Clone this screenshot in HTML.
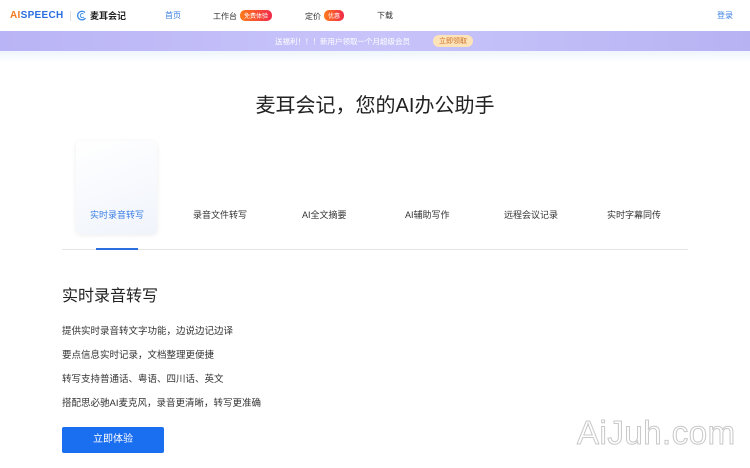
<!DOCTYPE html>
<html><head><meta charset="utf-8"><style>
*{margin:0;padding:0;box-sizing:border-box}
body{width:750px;height:468px;overflow:hidden;background:#fff;font-family:"Liberation Sans","Noto Sans CJK SC",sans-serif;position:relative;color:#333}
.a{position:absolute;white-space:nowrap}
.nav{font-size:8px;color:#333}
.badge{display:inline-block;color:#fff;font-size:6px;border-radius:5px;padding:1px 4px;background:linear-gradient(90deg,#ff7a1a,#f02a4a);vertical-align:1px;margin-left:3px}
.tab{font-size:9px;color:#333;top:208px}
.p{font-size:9.5px;color:#333;left:62px}
</style></head><body>
<div class="a" style="left:10px;top:10px;font-size:10px;font-weight:bold;color:#2a6ee0;letter-spacing:0.3px"><span style="color:#f07a20">AI</span>SPEECH</div>
<div class="a" style="left:70px;top:11px;width:1px;height:10px;background:#ddd"></div>
<svg class="a" style="left:76px;top:10px" width="11" height="11" viewBox="0 0 11 11"><path d="M9 2.5A4.3 4.3 0 1 0 9.5 8" fill="none" stroke="#3b8be8" stroke-width="1.3"/><path d="M7.5 4A2 2 0 1 0 7.8 7" fill="none" stroke="#3b8be8" stroke-width="1"/></svg>
<div class="a" style="left:90px;top:9px;font-size:9px;font-weight:bold;color:#222">麦耳会记</div>
<div class="a nav" style="left:165px;top:10px;color:#3b7fe6">首页</div>
<div class="a nav" style="left:213px;top:10px">工作台<span class="badge">免费体验</span></div>
<div class="a nav" style="left:305px;top:10px">定价<span class="badge">优惠</span></div>
<div class="a nav" style="left:377px;top:10px">下载</div>
<div class="a nav" style="left:717px;top:10px;color:#3b7fe6">登录</div>
<div class="a" style="left:0;top:31px;width:750px;height:20px;background:linear-gradient(90deg,#b9b4f5,#c8c4fa 50%,#b7b3f3)"></div>
<div class="a" style="left:275px;top:36px;font-size:7.5px;color:#fff">送福利！！！新用户领取一个月超级会员</div>
<div class="a" style="left:433px;top:35px;font-size:7px;color:#d0702a;background:#fde3b8;border-radius:6px;padding:1px 6px">立即领取</div>
<div class="a" style="left:0;top:51px;width:750px;height:12px;background:linear-gradient(#eef5fd,#fff)"></div>
<div class="a" style="left:0;top:89px;width:750px;text-align:center;font-size:20px;color:#222">麦耳会记，您的AI办公助手</div>
<div class="a" style="left:76px;top:141px;width:81px;height:93px;border-radius:4px;background:linear-gradient(160deg,#fff,#f0f4fb);box-shadow:0 1px 5px rgba(0,0,0,.08)"></div>
<div class="a tab" style="left:90px;color:#3b7fe6">实时录音转写</div>
<div class="a tab" style="left:193px">录音文件转写</div>
<div class="a tab" style="left:302px">AI全文摘要</div>
<div class="a tab" style="left:405px">AI辅助写作</div>
<div class="a tab" style="left:504px">远程会议记录</div>
<div class="a tab" style="left:607px">实时字幕同传</div>
<div class="a" style="left:62px;top:249px;width:626px;height:1px;background:#e5e5e5"></div>
<div class="a" style="left:96px;top:248px;width:42px;height:2px;background:#2a6ee0"></div>
<div class="a" style="left:62px;top:282px;font-size:16px;color:#222">实时录音转写</div>
<div class="a p" style="top:323px">提供实时录音转文字功能，边说边记边译</div>
<div class="a p" style="top:347px">要点信息实时记录，文档整理更便捷</div>
<div class="a p" style="top:371px">转写支持普通话、粤语、四川话、英文</div>
<div class="a p" style="top:395px">搭配思必驰AI麦克风，录音更清晰，转写更准确</div>
<div class="a" style="left:62px;top:427px;width:102px;height:26px;background:#1a6ef0;border-radius:2px;color:#fff;font-size:10px;text-align:center;line-height:26px">立即体验</div>
<div class="a" style="left:577px;top:414px;font-size:33px;color:#fff;-webkit-text-stroke:1px #c8c8c8;letter-spacing:0.5px">AiJuh.com</div>
</body></html>
